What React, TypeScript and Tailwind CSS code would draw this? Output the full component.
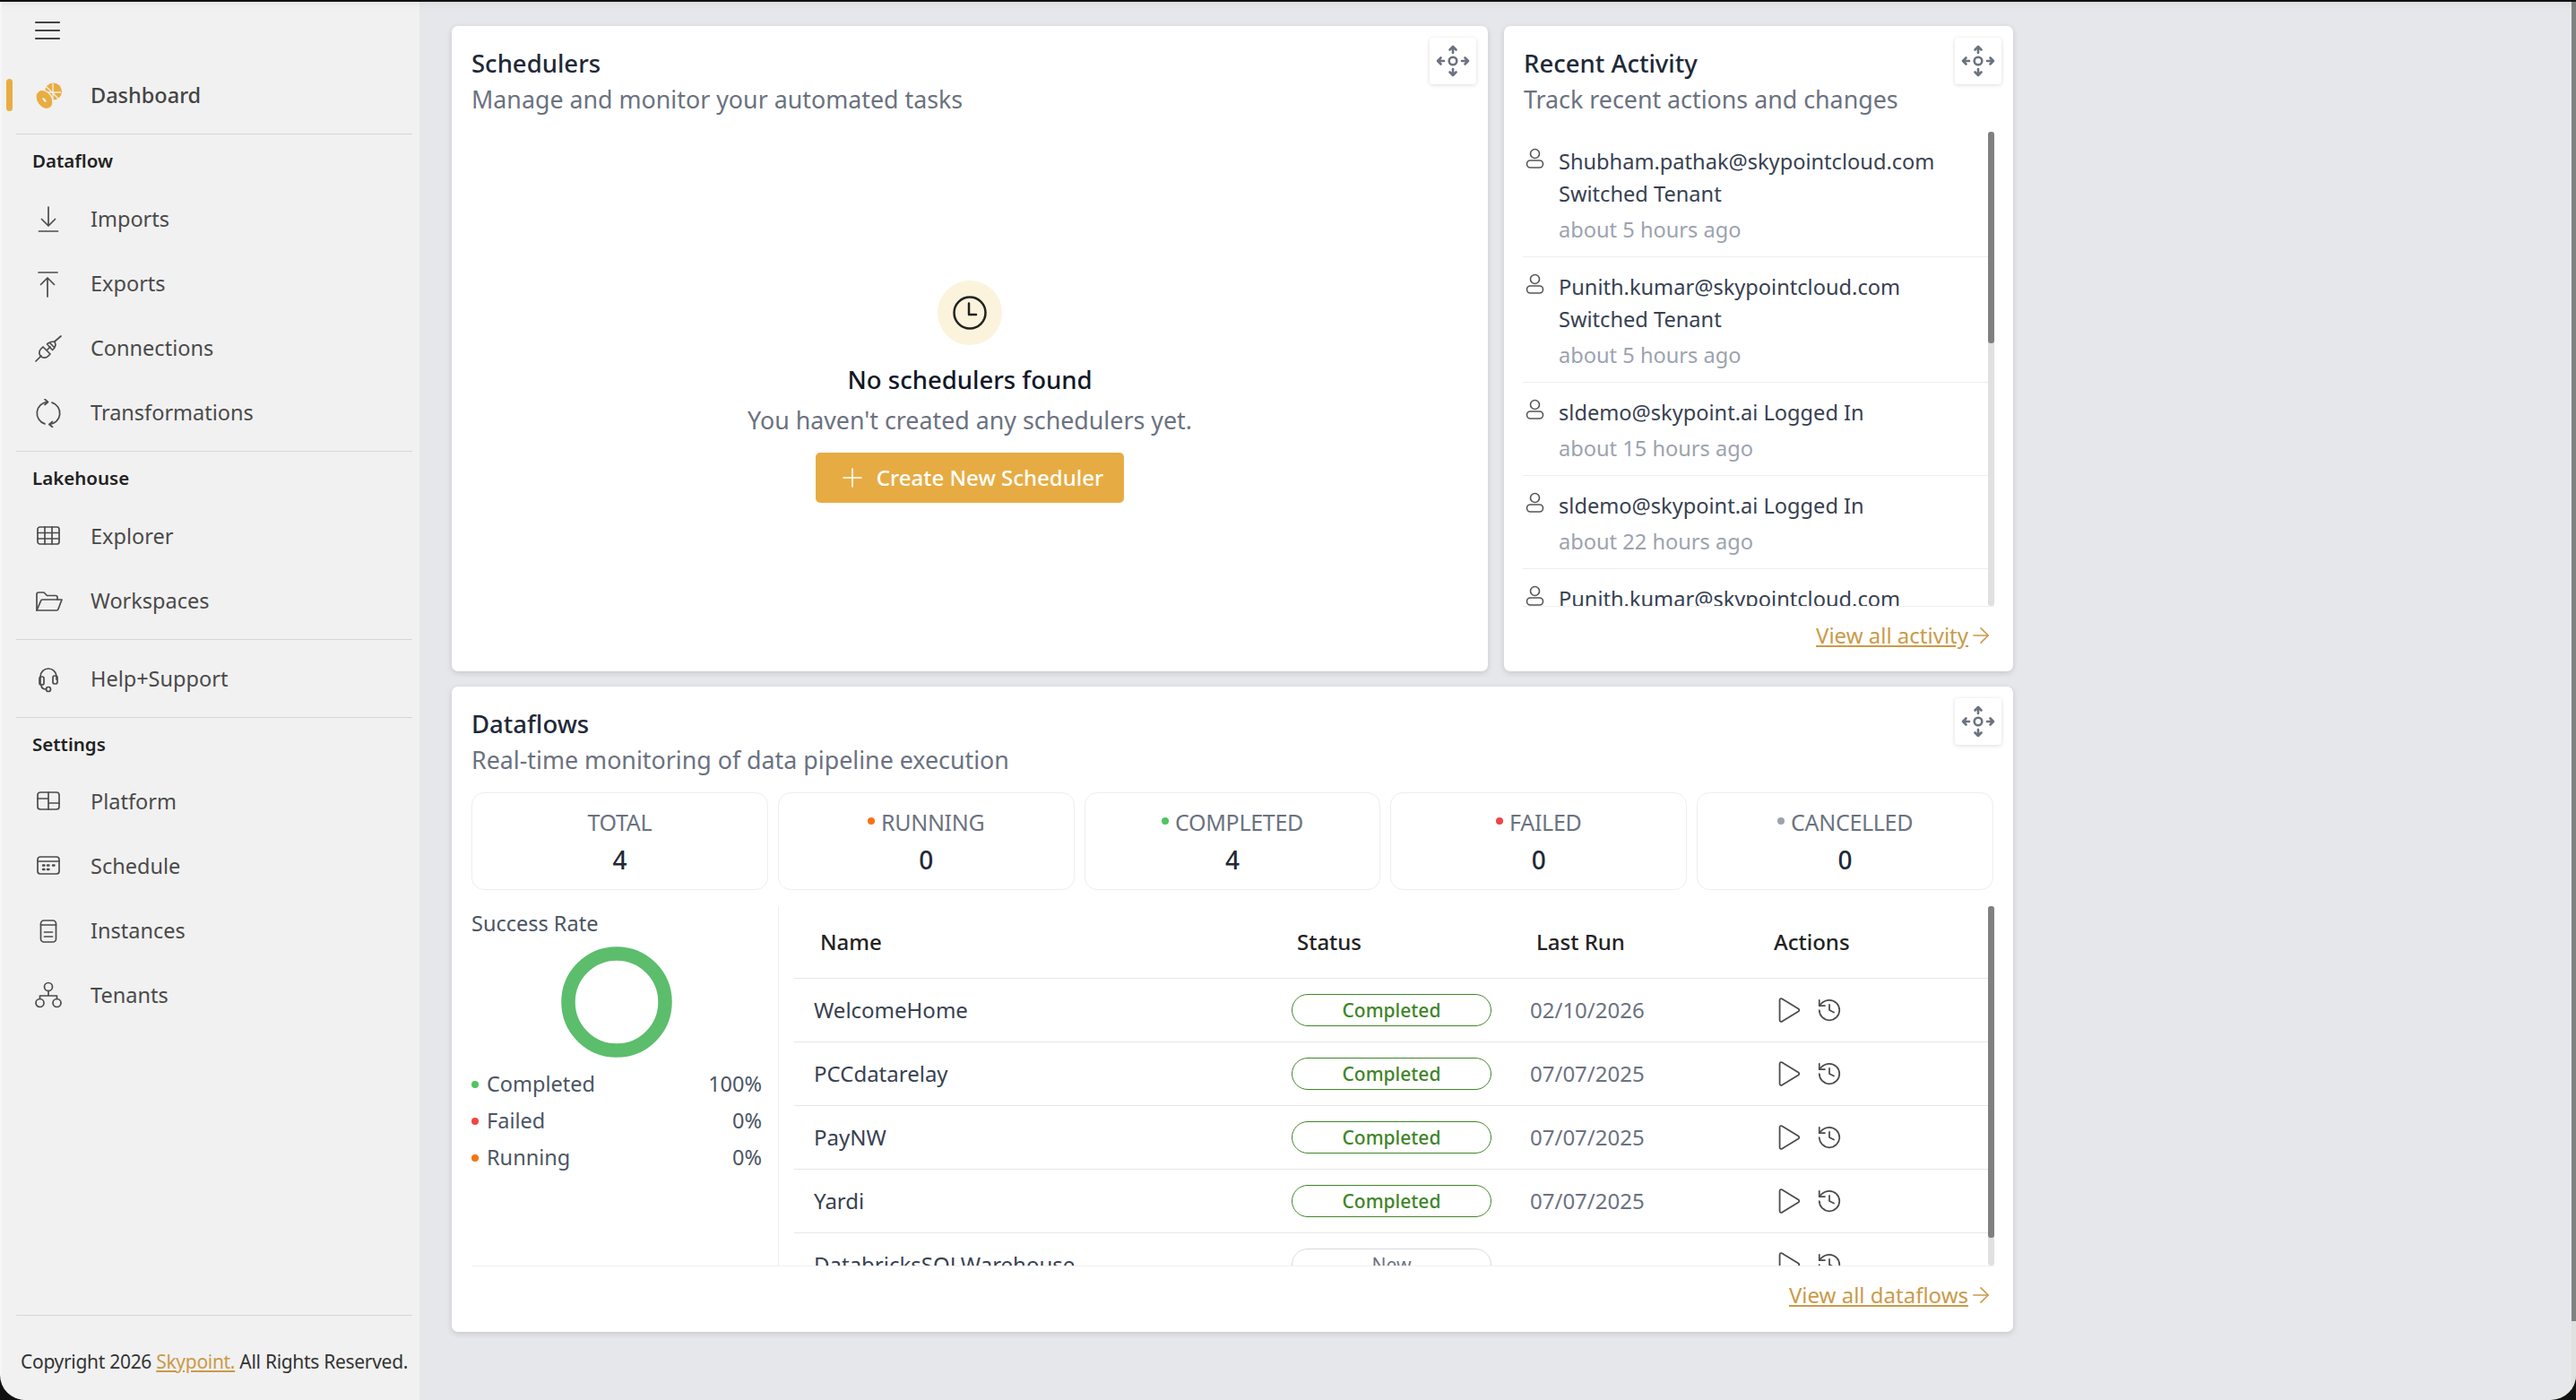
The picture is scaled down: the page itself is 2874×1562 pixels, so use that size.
import { ReactNode } from "react";
import { ArrowRight, History } from "lucide-react";

const iconProps = {
  fill: "none",
  stroke: "#4b4b4b",
  strokeWidth: 1.7,
  strokeLinecap: "round" as const,
  strokeLinejoin: "round" as const,
};

function Ico({ children, w = 32, h = 32 }: { children: ReactNode; w?: number; h?: number }) {
  return (
    <svg width={w} height={h} viewBox={`0 0 ${w} ${h}`} {...iconProps}>
      {children}
    </svg>
  );
}

const icons: Record<string, ReactNode> = {
  Imports: (
    <Ico>
      <path d="M16 2v21M8.500 15.500 16 23l7.500-7.500M5.500 29h21" />
    </Ico>
  ),
  Exports: (
    <Ico>
      <path d="M5 3h21M15 30V9M7.500 16.500 15 9l7.500 7.500" />
    </Ico>
  ),
  Connections: (
    <Ico>
      <path d="M2 30l6-6M30 2l-7 6" />
      <path d="M10 14l8 8-2.500 2.500a5.600 5.600 0 0 1-8-8zM14 18l4-4M18 10l4 4M14.500 11l1-1 3.500-1.500 4-0.500 1 4-1.500 3.500-2 2z" />
    </Ico>
  ),
  Transformations: (
    <Ico>
      <path d="M15 3.500A12.500 12.500 0 0 0 12 27.900M17 28.500A12.500 12.500 0 0 0 20 4.100" />
      <path d="M12 0.500l3.500 3-3.500 3M20.500 25.500l-3.500 3 3.500 3" />
    </Ico>
  ),
  Explorer: (
    <Ico>
      <rect x="4" y="5" width="24" height="19" rx="2.500" />
      <path d="M4 11.500h24M4 18h24M12 5v19M20 5v19" />
    </Ico>
  ),
  Workspaces: (
    <Ico>
      <path d="M3 26V8a2 2 0 0 1 2-2h6l3.500 3.500H24a2 2 0 0 1 2 2V14" />
      <path d="M3 26l4.500-10.500a2 2 0 0 1 2-1.500H31l-4 10.500a2 2 0 0 1-2 1.500z" />
    </Ico>
  ),
  "Help+Support": (
    <Ico>
      <path d="M7 21V13a9 9 0 0 1 18 0v3" />
      <rect x="6" y="13" width="5" height="9" rx="2" />
      <rect x="21" y="12" width="5" height="9" rx="2" />
      <path d="M8 22c0 4 3 5 5.500 5" />
      <circle cx="16" cy="27" r="2.500" />
    </Ico>
  ),
  Platform: (
    <Ico>
      <rect x="4" y="5" width="24" height="19" rx="3" />
      <path d="M4 12h12M16 5v19M16 17h12" />
    </Ico>
  ),
  Schedule: (
    <Ico>
      <rect x="4" y="5" width="24" height="19" rx="3" />
      <path d="M4 10h24" />
      <path d="M10 14.500h1.500M15 14.500h1.500M21 14.500h1.500M10 19h1.500M15 19h1.500" strokeWidth="2.400" />
    </Ico>
  ),
  Instances: (
    <Ico>
      <rect x="7.500" y="4" width="17" height="24" rx="3.500" />
      <path d="M7.500 9h17M11.500 17h9M11.500 22h9" />
    </Ico>
  ),
  Tenants: (
    <Ico>
      <circle cx="16" cy="6" r="4.500" />
      <circle cx="6.500" cy="24" r="4.500" />
      <circle cx="25.500" cy="24" r="4.500" />
      <path d="M16 10.500V16M6.500 19.500V16h19v3.500" />
    </Ico>
  ),
};

function DashIcon() {
  return (
    <svg width="30" height="30" viewBox="0 0 30 30">
      <circle cx="20.500" cy="10" r="9.500" fill="#e8ad42" />
      <path d="M12 4 26 18M20 1v18M12 11h17" stroke="#f1f1f1" strokeWidth="1.300" fill="none" />
      <ellipse cx="10.500" cy="19" rx="11.500" ry="8.500" transform="rotate(55 10.500 19)" fill="#e8ad42" stroke="#f1f1f1" strokeWidth="1.500" />
      <ellipse cx="10.500" cy="19.500" rx="3" ry="1.200" transform="rotate(50 10.500 19.500)" fill="#f1f1f1" />
    </svg>
  );
}

function MoveBtn() {
  return (
    <div className="absolute right-[13px] top-[13px] flex h-[52px] w-[52px] items-center justify-center rounded-[4px] bg-white shadow-[0_1px_5px_rgba(0,0,0,0.14)]">
      <svg width="38" height="38" viewBox="0 0 38 38" fill="none" stroke="#6b7280" strokeWidth="2.600" strokeLinecap="round" strokeLinejoin="round">
        <circle cx="19" cy="19" r="4.300" />
        <path d="M19 3v7M15.500 6.500 19 3l3.500 3.500M19 35v-7M15.500 31.500 19 35l3.500-3.500M2 19h7M5.500 15.500 2 19l3.500 3.500M36 19h-7M32.500 15.500 36 19l-3.500 3.500" />
      </svg>
    </div>
  );
}

function NavItem({ label }: { label: string }) {
  return (
    <div className="flex h-[72px] items-center">
      <div className="flex w-[99px] justify-center pl-[5px]">{icons[label]}</div>
      <span className="text-[23.500px] text-[#4a4a4a]">{label}</span>
    </div>
  );
}

function SectionHead({ label, h }: { label: string; h: string }) {
  return <div className={`flex items-center pl-[34px] text-[20.500px] font-semibold text-[#222222] ${h}`}>{label}</div>;
}

function Divider() {
  return <div className="ml-[16px] mr-[8px] h-px bg-[#d6d6d6]" />;
}

function Sidebar() {
  return (
    <aside className="flex w-[466px] flex-col bg-[#f1f1f1] shadow-[inset_0_10px_10px_-8px_rgba(0,0,0,0.06)]">
      <div className="flex h-[69px] items-start pl-[36px] pt-[21px]">
        <svg width="30" height="22" viewBox="0 0 30 22" stroke="#444444" strokeWidth="2.200" strokeLinecap="round">
          <path d="M2 2h26M2 11h26M2 20h26" />
        </svg>
      </div>
      <div className="relative flex h-[72px] items-center">
        <div className="absolute left-[5px] top-[17px] h-[36px] w-[7px] rounded-full bg-[#e8ad42]" />
        <div className="flex w-[99px] justify-center pl-[5px]">
          <DashIcon />
        </div>
        <span className="text-[23.500px] font-medium text-[#444444]">Dashboard</span>
      </div>
      <div className="mt-[6px]">
        <Divider />
      </div>
      <SectionHead label="Dataflow" h="h-[59px]" />
      {["Imports", "Exports", "Connections", "Transformations"].map((n) => (
        <NavItem key={n} label={n} />
      ))}
      <div className="mt-[6px]">
        <Divider />
      </div>
      <SectionHead label="Lakehouse" h="h-[59px]" />
      {["Explorer", "Workspaces"].map((n) => (
        <NavItem key={n} label={n} />
      ))}
      <div className="mb-[8px] mt-[6px]">
        <Divider />
      </div>
      <NavItem label="Help+Support" />
      <div className="mt-[6px]">
        <Divider />
      </div>
      <SectionHead label="Settings" h="h-[58px]" />
      {["Platform", "Schedule", "Instances", "Tenants"].map((n) => (
        <NavItem key={n} label={n} />
      ))}
      <div className="mt-auto">
        <Divider />
        <div className="flex h-[94px] items-center pl-[21px] pt-[9px] text-[21px] tracking-[-0.3px] text-[#333333]">
          <span>
            Copyright 2026 <span className="text-[#cb9a4a] underline">Skypoint.</span> All Rights Reserved.
          </span>
        </div>
      </div>
    </aside>
  );
}

function CardHead({ title, sub }: { title: string; sub: string }) {
  return (
    <div className="relative px-[22px] pt-[22px]">
      <div className="text-[27.500px] font-medium leading-[40px] text-[#1f2937]">{title}</div>
      <div className="text-[26.800px] leading-[40px] text-[#6b7280]">{sub}</div>
    </div>
  );
}

function ViewAll({ label }: { label: string }) {
  return (
    <div className="flex flex-1 items-start justify-end pr-[22px] pt-[14px]">
      <span className="flex items-center text-[#cb9a4a]">
        <span className="text-[24px] leading-[36px] underline">{label}</span>
        <ArrowRight size={28} strokeWidth={1.4} />
      </span>
    </div>
  );
}

function Schedulers() {
  return (
    <section className="relative h-[720px] flex-1 rounded-[7px] bg-white shadow-[0_2px_6px_rgba(0,0,0,0.14)]">
      <CardHead title="Schedulers" sub="Manage and monitor your automated tasks" />
      <MoveBtn />
      <div className="flex flex-col items-center pt-[182px]">
        <div className="flex h-[72px] w-[72px] items-center justify-center rounded-full bg-[#fbf3dc]">
          <svg width="40" height="40" viewBox="0 0 40 40" fill="none" stroke="#222222" strokeWidth="2.500" strokeLinecap="round" strokeLinejoin="round">
            <circle cx="20" cy="20" r="17.500" />
            <path d="M19 9.500V22h8" />
          </svg>
        </div>
        <div className="mt-[19px] text-[27.500px] font-medium leading-[40px] text-[#111827]">No schedulers found</div>
        <div className="mt-[5px] text-[26.800px] leading-[40px] text-[#6b7280]">You haven't created any schedulers yet.</div>
        <div className="mt-[16px] flex h-[56px] w-[344px] items-center justify-center gap-[16px] rounded-[5px] bg-[#e6ac43] pl-[7px] text-[24px] font-medium text-white">
          <svg width="22" height="22" viewBox="0 0 22 22" stroke="white" strokeWidth="1.600" strokeLinecap="round">
            <path d="M11 1v20M1 11h20" />
          </svg>
          Create New Scheduler
        </div>
      </div>
    </section>
  );
}

const activity = [
  { who: "Shubham.pathak@skypointcloud.com", what: "Switched Tenant", when: "about 5 hours ago" },
  { who: "Punith.kumar@skypointcloud.com", what: "Switched Tenant", when: "about 5 hours ago" },
  { who: "sldemo@skypoint.ai Logged In", when: "about 15 hours ago" },
  { who: "sldemo@skypoint.ai Logged In", when: "about 22 hours ago" },
  { who: "Punith.kumar@skypointcloud.com" },
];

function RecentActivity() {
  return (
    <section className="relative flex h-[720px] w-[568px] flex-col rounded-[7px] bg-white shadow-[0_2px_6px_rgba(0,0,0,0.14)]">
      <CardHead title="Recent Activity" sub="Track recent actions and changes" />
      <MoveBtn />
      <div className="mx-[21px] mt-[16px] flex h-[530px] overflow-hidden border-b border-[#f0f0f0]">
        <div className="min-w-0 flex-1">
          {activity.map((a, i) => (
            <div key={i} className="flex border-b border-[#eeeeee] pb-[12px] pl-[3px] pt-[15px]">
              <svg className="mt-[3px]" width="22" height="24" viewBox="0 0 22 24" fill="none" stroke="#555555" strokeWidth="1.600">
                <circle cx="10.500" cy="6.500" r="5" />
                <rect x="1.500" y="14" width="18" height="8" rx="4" />
              </svg>
              <div className="ml-[15px] text-[23.600px] leading-[36px] text-[#374151]">
                <div>{a.who}</div>
                {a.what && <div>{a.what}</div>}
                {a.when && <div className="mt-[4px] text-[#9ca3af]">{a.when}</div>}
              </div>
            </div>
          ))}
        </div>
        <div className="w-[7px] rounded-[3px] bg-[#e0e0e0]">
          <div className="h-[236px] rounded-[3px] bg-[#808080]" />
        </div>
      </div>
      <ViewAll label="View all activity" />
    </section>
  );
}

const stats = [
  { label: "TOTAL", value: 4, dot: "" },
  { label: "RUNNING", value: 0, dot: "bg-[#f97316]" },
  { label: "COMPLETED", value: 4, dot: "bg-[#4fc45f]" },
  { label: "FAILED", value: 0, dot: "bg-[#ef4444]" },
  { label: "CANCELLED", value: 0, dot: "bg-[#9ca3af]" },
];

const legend = [
  { label: "Completed", value: "100%", dot: "bg-[#4fc45f]" },
  { label: "Failed", value: "0%", dot: "bg-[#ef4444]" },
  { label: "Running", value: "0%", dot: "bg-[#f97316]" },
];

const rows = [
  { name: "WelcomeHome", status: "Completed", date: "02/10/2026" },
  { name: "PCCdatarelay", status: "Completed", date: "07/07/2025" },
  { name: "PayNW", status: "Completed", date: "07/07/2025" },
  { name: "Yardi", status: "Completed", date: "07/07/2025" },
  { name: "DatabricksSQLWarehouse", status: "New", date: "" },
];

function Dataflows() {
  return (
    <section className="relative flex h-[720px] flex-col rounded-[7px] bg-white shadow-[0_2px_6px_rgba(0,0,0,0.14)]">
      <CardHead title="Dataflows" sub="Real-time monitoring of data pipeline execution" />
      <MoveBtn />
      <div className="mx-[22px] mt-[16px] grid grid-cols-5 gap-[11px]">
        {stats.map((s) => (
          <div key={s.label} className="flex h-[109px] flex-col items-center rounded-[14px] border border-[#eceef1] pt-[13px]">
            <div className="flex h-[40px] items-center text-[25px] tracking-[-0.3px] text-[#6b7280]">
              {s.dot && <span className={`mr-[7px] mb-[4px] h-[8px] w-[8px] rounded-full ${s.dot}`} />}
              {s.label}
            </div>
            <div className="text-[28px] font-medium leading-[42px] text-[#1f2937]">{s.value}</div>
          </div>
        ))}
      </div>
      <div className="ml-[22px] mr-[21px] mt-[18px] flex h-[402px] overflow-hidden border-b border-[#f0f0f0]">
        <div className="w-[343px] border-r border-[#eeeeee] pr-[18px]">
          <div className="text-[23.500px] leading-[38px] text-[#4b5563]">Success Rate</div>
          <div className="mt-[7px] flex justify-center">
            <svg width="124" height="124" viewBox="0 0 124 124">
              <circle cx="62" cy="62" r="54" fill="none" stroke="#5cbd6c" strokeWidth="15.500" />
            </svg>
          </div>
          <div className="mt-[9px]">
            {legend.map((l) => (
              <div key={l.label} className="flex h-[41px] items-center text-[23.500px] text-[#4b5563]">
                <span className={`mr-[9px] h-[8px] w-[8px] rounded-full ${l.dot}`} />
                <span className="flex-1">{l.label}</span>
                <span>{l.value}</span>
              </div>
            ))}
          </div>
        </div>
        <div className="min-w-0 flex-1 pl-[17px]">
          <div className="grid h-[81px] grid-cols-[555px_266px_266px_1fr] items-center border-b border-[#e5e7eb] text-[24px] font-medium text-[#222222]">
            <div className="pl-[29px]">Name</div>
            <div className="pl-[6px]">Status</div>
            <div className="pl-[7px]">Last Run</div>
            <div className="pl-[6px]">Actions</div>
          </div>
          {rows.map((r) => (
            <div key={r.name} className="grid h-[71px] grid-cols-[555px_266px_266px_1fr] items-center border-b border-[#e5e7eb] text-[24px]">
              <div className="pl-[22px] text-[#374151]">{r.name}</div>
              <div>
                {r.status === "New" ? (
                  <div className="flex h-[36px] w-[223px] items-center justify-center rounded-full border border-[#d8dade] pt-[2px] text-[21px] text-[#6b7280]">New</div>
                ) : (
                  <div className="flex h-[36px] w-[223px] items-center justify-center rounded-full border border-[#3f8528] pt-[2px] text-[21px] font-medium text-[#3f8528]">{r.status}</div>
                )}
              </div>
              <div className="text-[#6b7280]">{r.date}</div>
              <div className="flex items-center gap-[17px] pl-[11px] text-[#4b4b4b]">
                <svg width="25" height="30" viewBox="0 0 24 28" fill="none" stroke="#4b4b4b" strokeWidth="1.700" strokeLinejoin="round">
                  <path d="M1.500 3.500c0-1.600 1.400-2.300 2.700-1.500L21.500 12.500c1.200.8 1.200 2.200 0 3L4.200 26c-1.300.8-2.700.1-2.700-1.500z" />
                </svg>
                <History size={30} strokeWidth={1.4} />
              </div>
            </div>
          ))}
        </div>
        <div className="w-[7px] rounded-[3px] bg-[#e0e0e0]">
          <div className="h-[370px] rounded-[3px] bg-[#808080]" />
        </div>
      </div>
      <ViewAll label="View all dataflows" />
    </section>
  );
}

export default function App() {
  return (
    <div className="h-[1562px] w-[2874px] overflow-hidden bg-[#111111] pt-[2px] font-['Noto_Sans',sans-serif]">
      <div className="flex h-[1560px] overflow-hidden rounded-b-[28px] border-l-2 border-[#f6f6f6] bg-[#e6e7eb]">
        <Sidebar />
        <main className="min-w-0 flex-1 pl-[36px] pt-[27px] shadow-[inset_0_10px_10px_-8px_rgba(0,0,0,0.06)]">
          <div className="flex w-[1742px] gap-[18px]">
            <Schedulers />
            <RecentActivity />
          </div>
          <div className="mt-[17px] w-[1742px]">
            <Dataflows />
          </div>
        </main>
        <div className="w-[5px] bg-[#e0e0e0]">
          <div className="h-[1472px] bg-[#808080]" />
        </div>
      </div>
    </div>
  );
}
